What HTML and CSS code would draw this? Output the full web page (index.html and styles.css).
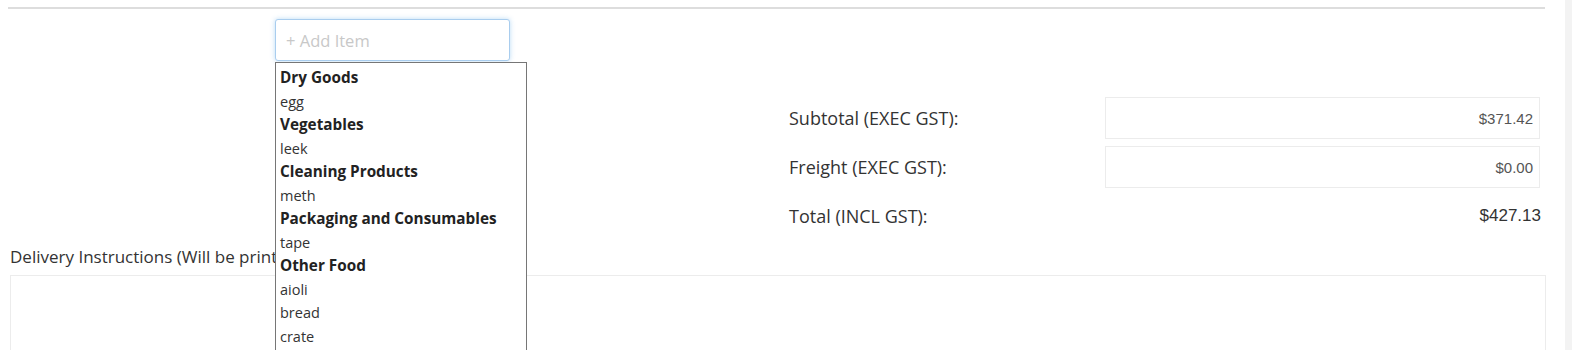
FILE: index.html
```html
<!DOCTYPE html>
<html lang="en">
<head>
  <meta charset="UTF-8" />
  <meta name="viewport" content="width=device-width, initial-scale=1.0"/>
  <title>Order - Totals</title>
  <link rel="stylesheet" href="styles.css">
</head>
<body>

  <div class="page">
    <main class="order">
      <hr class="divider" />

      <div class="add-row">
        <div class="add-item">
          <input type="text" id="itemInput" class="add-input" placeholder="+ Add Item" autofocus />
          <ul class="suggestions">
            <li class="group">Dry Goods</li>
            <li>egg</li>
            <li class="group">Vegetables</li>
            <li>leek</li>
            <li class="group">Cleaning Products</li>
            <li>meth</li>
            <li class="group">Packaging and Consumables</li>
            <li>tape</li>
            <li class="group">Other Food</li>
            <li>aioli</li>
            <li>bread</li>
            <li>crate</li>
          </ul>
        </div>
      </div>

      <div class="totals">
        <div class="totals-label">Subtotal (EXEC GST):</div>
        <div class="totals-box">$371.42</div>
        <div class="totals-label">Freight (EXEC GST):</div>
        <div class="totals-box">$0.00</div>
        <div class="totals-label">Total (INCL GST):</div>
        <div class="totals-value">$427.13</div>
      </div>

      <label class="delivery-label" for="deliveryNotes">Delivery Instructions (Will be printed on invoice)</label>
      <textarea id="deliveryNotes" class="delivery-notes"></textarea>
    </main>
    <div class="scroll-track"></div>
  </div>

</body>
</html>
```

FILE: styles.css
```css
* {
  box-sizing: border-box;
}

body {
  margin: 0;
  padding: 0;
  background: white;
  font-family: 'Open Sans', Lato, sans-serif;
  color: #333;
  overflow: hidden;
}

.page {
  display: flex;
  height: 350px;
}

.order {
  flex: 1;
  padding: 7px 20px 0 8px;
}

.scroll-track {
  width: 7px;
  background: #f3f3f3;
}

.divider {
  margin: 0;
  border: none;
  border-top: 2px solid #dddddd;
}

.add-row {
  margin-top: 10px;
  padding-left: 267px;
}

.add-item {
  position: relative;
  width: 235px;
}

.add-input {
  display: block;
  width: 235px;
  height: 42px;
  padding: 0 10px;
  border: 1px solid #a9cdee;
  border-radius: 3px;
  box-shadow: 0 0 5px rgba(102, 175, 233, 0.45);
  font-family: 'Open Sans', sans-serif;
  font-size: 16.5px;
  color: #333;
  outline: none;
}

.add-input::placeholder {
  color: #c8c8c8;
}

.suggestions {
  position: absolute;
  top: 43px;
  left: 0;
  width: 252px;
  height: 300px;
  margin: 0;
  padding: 3px 4px 0;
  list-style: none;
  background: white;
  border: 1px solid #767676;
  font-size: 14.5px;
  line-height: 23.5px;
  color: #333;
  z-index: 2;
}

.suggestions .group {
  font-size: 15.3px;
  font-weight: bold;
  color: #222;
}

.totals {
  display: grid;
  grid-template-columns: 316px 435px;
  grid-auto-rows: 42px;
  row-gap: 7px;
  margin-top: 36px;
  margin-left: 781px;
  font-size: 18px;
}

.totals-label {
  display: flex;
  align-items: center;
}

.totals-box {
  display: flex;
  align-items: center;
  justify-content: flex-end;
  padding-right: 6px;
  border: 1px solid #ececec;
  font-family: 'Liberation Sans', Arial, sans-serif;
  font-size: 15px;
  color: #555;
}

.totals-value {
  display: flex;
  align-items: center;
  justify-content: flex-end;
  margin-right: -1px;
  font-family: 'Liberation Sans', Arial, sans-serif;
  font-size: 17px;
  color: #333;
}

.delivery-label {
  display: block;
  margin-top: 8px;
  padding-left: 2px;
  font-size: 17px;
  line-height: 23px;
}

.delivery-notes {
  display: block;
  width: calc(100% - 1px);
  height: 120px;
  margin: 7px 0 0 2px;
  border: 1px solid #ececec;
  resize: none;
}
```
